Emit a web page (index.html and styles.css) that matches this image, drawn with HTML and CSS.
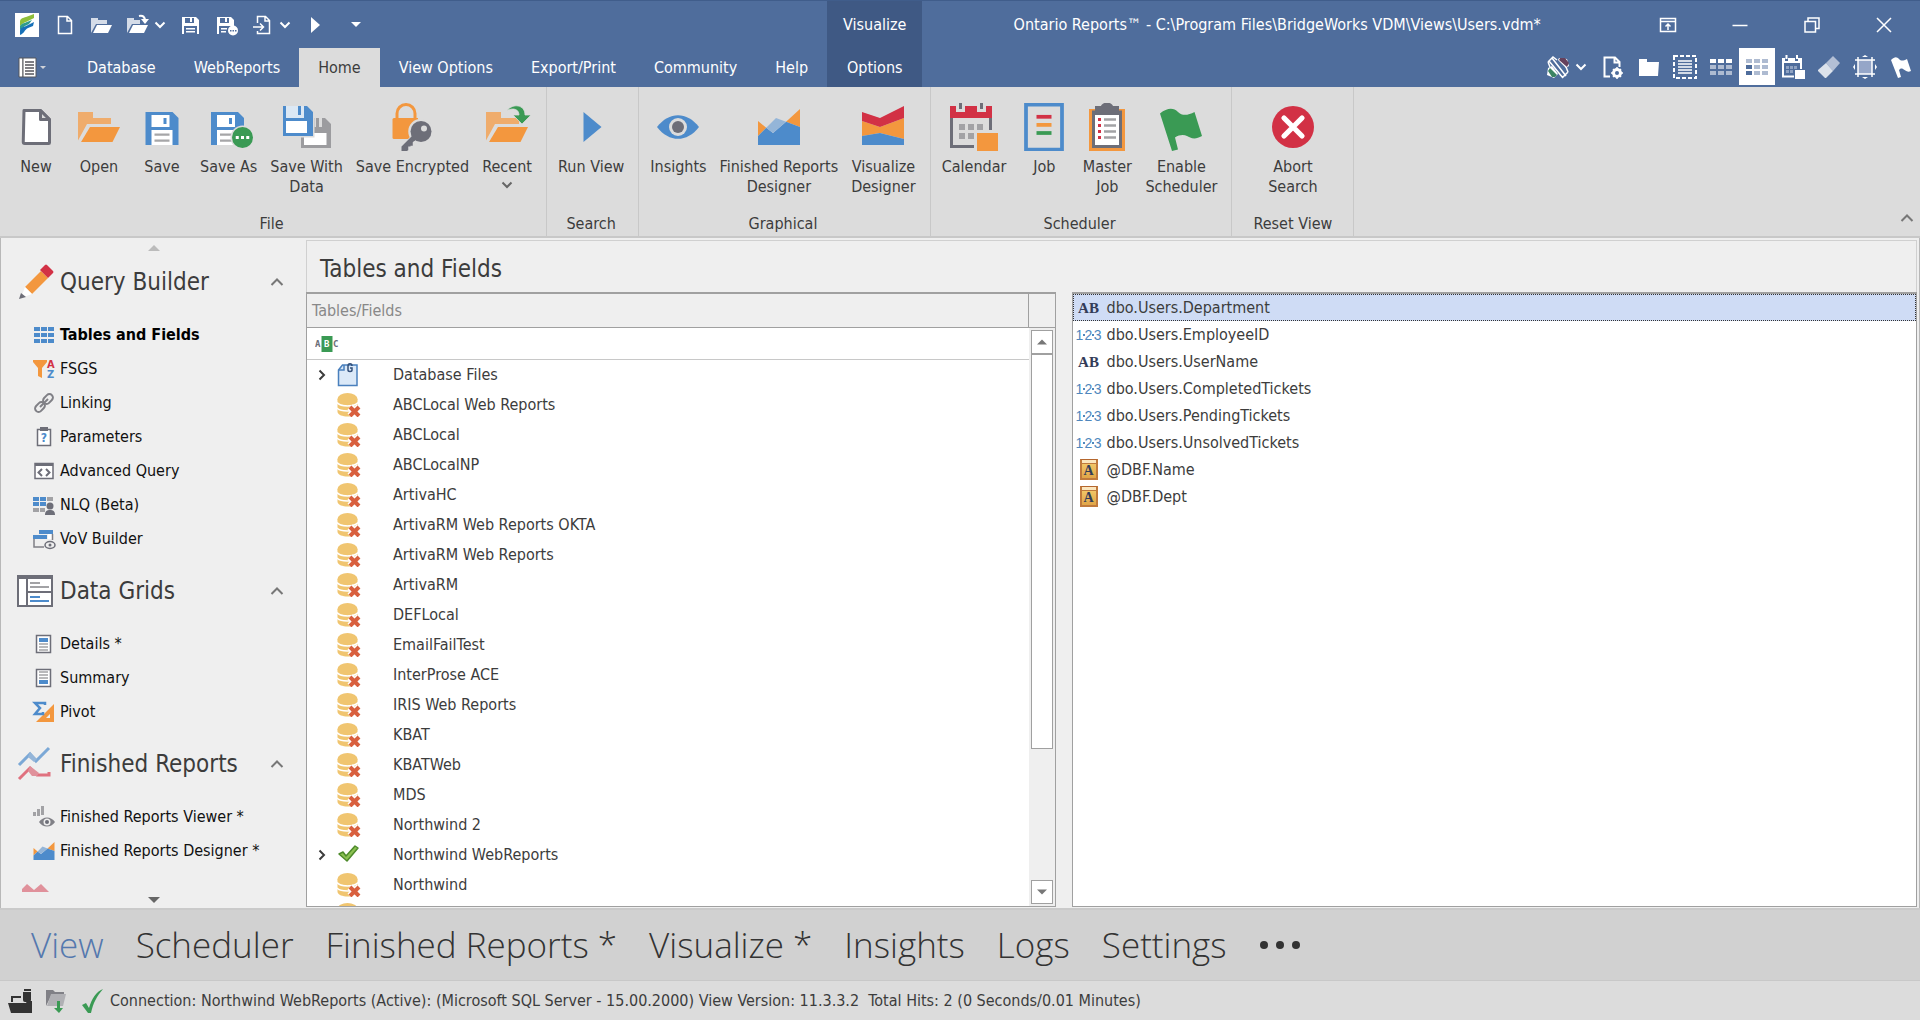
FILE: index.html
```
<!DOCTYPE html>
<html lang="en">
<head>
    <meta charset="UTF-8">
    <meta name="viewport" content="width=device-width, initial-scale=1.0">
    <title>Ontario Reports</title>
    <link rel="stylesheet" href="styles.css">
</head>
<body>
    <!-- shared icons -->
    <svg class="defs" width="0" height="0" aria-hidden="true">
        <symbol id="i-chev-down" viewBox="0 0 12 8"><path d="M1.500 1.500L6 6l4.500-4.500" fill="none" stroke="currentColor" stroke-width="2"/></symbol>
        <symbol id="i-chev-up" viewBox="0 0 14 10"><path d="M1.500 8L7 2.500L12.500 8" fill="none" stroke="currentColor" stroke-width="2"/></symbol>
        <symbol id="i-chev-right" viewBox="0 0 8 12"><path d="M1.500 1.500L6 6L1.500 10.500" fill="none" stroke="currentColor" stroke-width="2"/></symbol>
        <symbol id="i-tri-down" viewBox="0 0 12 6"><path d="M0 0h12L6 6z" fill="currentColor"/></symbol>
        <symbol id="i-tri-up" viewBox="0 0 12 6"><path d="M0 6h12L6 0z" fill="currentColor"/></symbol>
        <symbol id="i-db" viewBox="0 0 24 24">
            <path d="M.5 6v13c1 6 19 6 20 0V6z" fill="#f0c570"/>
            <path d="M0 9.500c3 4.500 18 4.500 21 0M0 15c3 4 18 4 21 0" fill="none" stroke="#fff" stroke-width="1.500"/>
            <ellipse cx="10.500" cy="6" rx="10" ry="6" fill="#f0c570"/>
            <path d="M13 14l9 9M22 14l-9 9" stroke="#fff" stroke-width="7"/>
            <path d="M13 14l9 9M22 14l-9 9" stroke="#d9603f" stroke-width="4"/>
        </symbol>
        <symbol id="i-area" viewBox="0 0 32 32">
            <path d="M2 12l5.500 4.500L2 22zM20.700 12.500L30 4v12z" fill="#f3973e"/>
            <path d="M2 22l5.500-5.500L12 20l8.700-7.500L30 16v12H2z" fill="#4d8bcb"/>
            <path d="M7.500 16.500L14 10l6.700 2.500L12 20z" fill="#94b5d8"/>
        </symbol>
    </svg>

    <header class="app-header">
        <div class="header-left">
            <div class="quick-bar">
                <svg class="logo" viewBox="0 0 24 24"><path d="M0 0h24v24H0z" fill="#fff"/><path d="M5 13V9c0-4 3-4 6-5l8-3v4l-8 4c-3 1-4 2-6 4z" fill="#8fbf3a"/><path d="M5 13c2-3 5-3 7-4l5-2-3 4-4 2-5 4z" fill="#2f9c8c"/><path d="M5 22v-4c0-3 3-4 6-5l8-4-1 4-5 2c-4 2-3 5-8 7z" fill="#1670b8"/></svg>
                <button class="quick-btn" aria-label="New"><svg viewBox="0 0 24 24"><path d="M5.500 3.500h9l4 4v13h-13zM14 4v4h4" fill="none" stroke="#fff" stroke-width="1.500"/></svg></button>
                <button class="quick-btn" aria-label="Open"><svg viewBox="0 0 24 24"><path d="M2 20V5h7v2h9v4H7z" fill="#d5dce8"/><path d="M4 20l4-8h15l-4 8z" fill="#fff"/></svg></button>
                <button class="quick-btn with-arrow" aria-label="Recent"><svg viewBox="0 0 24 24"><path d="M2 20V5h7v2h6v4H7z" fill="#d5dce8"/><path d="M4 20l4-8h15l-4 8z" fill="#fff"/><path d="M14 3c4-1 6 1 6 5" fill="none" stroke="#fff" stroke-width="2"/><path d="M16 6h8l-4 5z" fill="#fff"/></svg><svg class="arrow"><use href="#i-chev-down"/></svg></button>
                <button class="quick-btn" aria-label="Save"><svg viewBox="0 0 24 24"><path d="M4 4h14l3 3v14H4z" fill="#fff"/><path d="M7 5h9v5H7zM6 13h13v8H6z" fill="#4f6d9c"/><path d="M12 5h2v4h-2zM8 15h9v1.500H8zM8 18h9v1.500H8z" fill="#fff"/></svg></button>
                <button class="quick-btn" aria-label="Save As"><svg viewBox="0 0 24 24"><path d="M3 4h14l3 3v14H3z" fill="#fff"/><path d="M6 5h9v5H6zM5 13h13v8H5z" fill="#4f6d9c"/><path d="M11 5h2v4h-2zM7 15h6v1.500H7zM7 18h5v1.500H7z" fill="#fff"/><circle cx="19" cy="17.500" r="5" fill="#fff"/><path d="M16 17h1.500v1.500H16zM18.500 17H20v1.500h-1.500zM21 17h1.500v1.500H21z" fill="#4f6d9c"/></svg></button>
                <button class="quick-btn with-arrow" aria-label="Import"><svg viewBox="0 0 24 24"><path d="M7.500 10V3.500h8l4 4v13h-12V18M15 4v4h4M3 14h10M10 10.500l3.500 3.500-3.500 3.500" fill="none" stroke="#fff" stroke-width="1.500"/></svg><svg class="arrow"><use href="#i-chev-down"/></svg></button>
                <button class="quick-btn" aria-label="Run"><svg viewBox="0 0 24 24"><path d="M8 4l9 8-9 8z" fill="#fff"/></svg></button>
                <button class="quick-btn quick-more" aria-label="Customize"><svg class="caret"><use href="#i-tri-down"/></svg></button>
            </div>
            <nav class="tabs">
                <button class="app-menu" aria-label="Application menu"><svg viewBox="0 0 28 22"><path d="M1 1h4v19H1z" fill="#fff" stroke="#55565c"/><path d="M5 1h13v19H5z" fill="#fff" stroke="#55565c"/><path d="M7 5h9M7 8h9M7 11h9M7 14h9M7 17h9" stroke="#55565c" stroke-width="1.500"/><path d="M22 9h6l-3 3z" fill="#cfd2d8"/></svg></button>
                <button class="tab">Database</button>
                <button class="tab">WebReports</button>
                <button class="tab active">Home</button>
                <button class="tab">View Options</button>
                <button class="tab">Export/Print</button>
                <button class="tab">Community</button>
                <button class="tab">Help</button>
            </nav>
        </div>
        <div class="header-context">
            <span class="context-title">Visualize</span>
            <button class="tab">Options</button>
        </div>
        <div class="header-right">
            <div class="title-bar">
                <h1 class="window-title">Ontario Reports™ - C:\Program Files\BridgeWorks VDM\Views\Users.vdm*</h1>
                <button class="window-btn" aria-label="Ribbon display"><svg viewBox="0 0 18 18"><path d="M1.500 2.500h15v13h-15zM1.500 5.500h15M9 14V8M6.500 10.500L9 8l2.500 2.500" fill="none" stroke="#fff" stroke-width="1.500"/></svg></button>
                <button class="window-btn" aria-label="Minimize"><svg viewBox="0 0 18 18"><path d="M1.500 9.500h15" stroke="#fff" stroke-width="1.500"/></svg></button>
                <button class="window-btn" aria-label="Restore"><svg viewBox="0 0 18 18"><path d="M2 5.500h10.500V16H2zM5 5V2h11v10.500h-3.500" fill="none" stroke="#fff" stroke-width="1.500"/></svg></button>
                <button class="window-btn" aria-label="Close"><svg viewBox="0 0 18 18"><path d="M2 2l14 14M16 2L2 16" stroke="#fff" stroke-width="1.500"/></svg></button>
            </div>
            <div class="toolbar">
                <button class="tool-btn with-arrow" aria-label="Disconnect"><svg viewBox="0 0 24 24"><path d="M2 7l5-5 4 3M2 7l2 5M22 17l-5 5-3-2M22 17l-2-5M6 3l14 18M3 6l14 17" fill="none" stroke="#fff" stroke-width="1.500"/><path d="M13 3l8 1 2 7-3 2-8-8z" fill="#fff"/><path d="M14 3h5l4 5-2 4-8-7z" fill="#66415c"/><path d="M1 20l1-7 4-2 6 8-4 4z" fill="#fff"/><path d="M2 16l2-3 7 7-2 2H6z" fill="#3c8464"/></svg><svg class="arrow"><use href="#i-chev-down"/></svg></button>
                <button class="tool-btn" aria-label="View settings"><svg viewBox="0 0 24 24"><path d="M9 21.500H3.500v-19H14l4.500 4.500v5M13.500 3v4.500H18" fill="none" stroke="#fff" stroke-width="2"/><circle cx="16" cy="18" r="3.500" fill="none" stroke="#fff" stroke-width="3"/><path d="M16 12v12M10 18h12M12 14l8 8M20 14l-8 8" stroke="#fff" stroke-width="1.500"/><circle cx="16" cy="18" r="2" fill="#4f6d9c"/></svg></button>
                <button class="tool-btn" aria-label="Folder"><svg viewBox="0 0 24 24"><path d="M2 21V4h8v3h12l-1 14z" fill="#fff"/></svg></button>
                <button class="tool-btn" aria-label="Select all"><svg viewBox="0 0 24 24"><path d="M1 1h22v22H1z" fill="none" stroke="#fff" stroke-width="2" stroke-dasharray="4 2"/><path d="M5 6h14M5 9h14M5 12h14M5 15h14M5 18h14" stroke="#fff" stroke-width="1.500"/></svg></button>
                <button class="tool-btn" aria-label="Grid"><svg viewBox="0 0 24 24"><path d="M1 4h6v4H1zM9 4h6v4H9zM17 4h6v4h-6z" fill="#fff"/><path d="M1 10h6v4H1zM9 10h6v4H9zM17 10h6v4h-6zM1 16h6v4H1zM9 16h6v4H9zM17 16h6v4h-6z" fill="#aebbd1"/></svg></button>
                <button class="tool-btn active" aria-label="Grid columns"><svg viewBox="0 0 24 24"><path d="M1 4h6v4H1zM9 4h6v4H9zM17 4h6v4h-6zM9 10h6v4H9zM17 10h6v4h-6zM9 16h6v4H9zM17 16h6v4h-6z" fill="#aebbd1"/><path d="M1 10h6v4H1zM1 16h6v4H1z" fill="#4f6d9c"/></svg></button>
                <button class="tool-btn" aria-label="Calendar"><svg viewBox="0 0 24 24"><path d="M1 3h3v3h3V3h7v3h3V3h4v5H1zM4.500 0h2v4h-2zM15 0h2v4h-2z" fill="#fff"/><path d="M2 7v14.500h11M20 7v7" fill="none" stroke="#fff" stroke-width="2"/><path d="M5 11h3v3H5zM9 11h3v3H9zM13 11h3v3h-3zM5 15h3v3H5zM9 15h3v3H9z" fill="#8fa2c2"/><path d="M14 15h10v9H14z" fill="#fff"/></svg></button>
                <button class="tool-btn" aria-label="Eraser"><svg viewBox="0 0 24 24"><path d="M9 8l7-7 7 7-7 8z" fill="#b3bfd5"/><path d="M9 8l7 8-7 7H8l-7-7v-1z" fill="#fff" opacity=".8"/></svg></button>
                <button class="tool-btn" aria-label="Fit"><svg viewBox="0 0 24 24"><path d="M5 5h14v14H5z" fill="#95a6c8"/><path d="M5 2v20M19 2v20M2 5h20M2 19h20" stroke="#fff" stroke-width="1.500"/><path d="M9 2l3-2 3 2zM9 22l3 2 3-2zM2 9l-2 3 2 3zM22 9l2 3-2 3z" fill="#fff"/></svg></button>
                <button class="tool-btn" aria-label="Flag"><svg viewBox="0 0 24 24"><path d="M2 5c4-4 6-3 8-1s4 2 8 0l4 12c-4 2-6-1-8-2s-3 0-4 1l2 7-3 1z" fill="#fff"/></svg></button>
            </div>
        </div>
    </header>

    <section class="ribbon">
        <div class="ribbon-group">
            <div class="ribbon-items">
                <button class="ribbon-btn"><svg viewBox="0 0 32 32"><path d="M8 5h11l6 6v15.500a.5.500 0 0 1-.5.500h-16a1 1 0 0 1-1-1z" fill="#fff" stroke="#6d6e78" stroke-width="2" stroke-linejoin="round"/><path d="M19 5v6h6z" fill="#dcdcdc" stroke="#6d6e78" stroke-width="2" stroke-linejoin="round"/></svg>New</button>
                <button class="ribbon-btn"><svg viewBox="0 0 32 32"><path d="M2 25V6h10v4h12v4H8z" fill="#efac6c"/><path d="M4 26l6-10h20l-5 10z" fill="#f3973e"/></svg>Open</button>
                <button class="ribbon-btn"><svg viewBox="0 0 32 32"><path d="M5 6h18l4 4v18H5z" fill="#4d8bcb"/><path d="M9 8h12v8H9zM9 18h14v10H9z" fill="#fff"/><path d="M17 10h2v4h-2z" fill="#4d8bcb"/><path d="M11 21h10M11 25h10" stroke="#a6a6a8" stroke-width="1.500"/></svg>Save</button>
                <button class="ribbon-btn"><svg viewBox="0 0 32 32"><path d="M4 6h18l4 4v18H4z" fill="#4d8bcb"/><path d="M8 8h12v8H8zM8 18h14v10H8z" fill="#fff"/><path d="M16 10h2v4h-2z" fill="#4d8bcb"/><path d="M10 21h10M10 25h10" stroke="#a6a6a8" stroke-width="1.500"/><circle cx="25" cy="23" r="8" fill="#dcdcdc"/><circle cx="25" cy="23" r="7" fill="#3a9a54"/><path d="M20.500 22h2v2h-2zM24 22h2v2h-2zM27.500 22h2v2h-2z" fill="#fff"/></svg>Save As</button>
                <button class="ribbon-btn"><svg viewBox="0 0 32 32"><path d="M12 10h16l4 4v16H12z" fill="#9c9c9f"/><path d="M14 20h15v8H14z" fill="#fff"/><path d="M21 10h5v6h-5z" fill="#dcdcdc"/><path d="M22 10h2v6h-2z" fill="#9c9c9f"/><path d="M0 2h16l5 4v17H0z" fill="#dcdcdc"/><path d="M0 2h2v8h12V2h2l4 4v16H0z" fill="#4d8bcb"/><path d="M2 2h12v8H2z" fill="#dce8f4"/><path d="M2 12h14v8H2z" fill="#fff"/><path d="M10 2h2v6h-2z" fill="#4d8bcb"/></svg>Save With<br>Data</button>
                <button class="ribbon-btn"><svg viewBox="0 0 32 32"><path d="M6 11V7a6 6 0 0 1 12 0v4" fill="none" stroke="#f3973e" stroke-width="2"/><path d="M4 10h16v14H4a1 1 0 0 1-1-1V11a1 1 0 0 1 1-1z" fill="#f3973e"/><circle cx="22" cy="19" r="8.500" fill="#dcdcdc"/><path d="M17 21l-8 8v3h5v-3h3v-3l4-3" fill="#6d6e78" stroke="#dcdcdc"/><path d="M18 20l-9 9v3h4v-3h2v-2l6-4z" fill="#6d6e78"/><circle cx="22" cy="19" r="7" fill="#6d6e78"/><circle cx="24" cy="17" r="2" fill="#dcdcdc"/></svg>Save Encrypted</button>
                <button class="ribbon-btn"><svg viewBox="0 0 32 32"><path d="M2 25V6h10v4h12v4H8z" fill="#efac6c"/><path d="M4 26l6-10h20l-5 10z" fill="#f3973e"/><path d="M16 5c4-5 12-4 12 3h4l-6 6-6-6h4c0-4-4-5-8-3z" fill="#3a9a54" stroke="#dcdcdc" stroke-width=".5"/></svg>Recent<svg class="drop"><use href="#i-chev-down"/></svg></button>
            </div>
            <div class="ribbon-label">File</div>
        </div>
        <div class="ribbon-group">
            <div class="ribbon-items">
                <button class="ribbon-btn"><svg viewBox="0 0 32 32"><path d="M11 6l12 10-12 10z" fill="#4d8bcb"/></svg>Run View</button>
            </div>
            <div class="ribbon-label">Search</div>
        </div>
        <div class="ribbon-group">
            <div class="ribbon-items">
                <button class="ribbon-btn"><svg viewBox="0 0 32 32"><path d="M2 16C10 5.500 22 5.500 30 16 22 26.500 10 26.500 2 16z" fill="#4d8bcb"/><circle cx="16" cy="16" r="6" fill="#dcdcdc"/><circle cx="16" cy="16" r="4" fill="#6d6e78"/></svg>Insights</button>
                <button class="ribbon-btn"><svg><use href="#i-area"/></svg>Finished Reports<br>Designer</button>
                <button class="ribbon-btn"><svg viewBox="0 0 32 32"><path d="M2 12l12 4 16-6v14l-16-4-12 2z" fill="#f3973e"/><path d="M2 6l12 4 16-8v8l-16 6-12-4z" fill="#d23145"/><path d="M2 22l12-2 16 4v4H2z" fill="#4d8bcb"/></svg>Visualize<br>Designer</button>
            </div>
            <div class="ribbon-label">Graphical</div>
        </div>
        <div class="ribbon-group">
            <div class="ribbon-items">
                <button class="ribbon-btn"><svg viewBox="0 0 32 32"><path d="M1 10v19h15M27 10v8" fill="none" stroke="#6d6e78" stroke-width="2"/><path d="M0 2h4v4h6V2h8v4h6V2h4v8H0z" fill="#d23145"/><path d="M6 0h2v4H6zM20 0h2v4h-2z" fill="#6d6e78"/><path d="M6 14h4v4H6zM12 14h4v4h-4zM18 14h4v4h-4zM6 20h4v4H6zM12 20h4v4h-4z" fill="#a2a2a5"/><path d="M18 20h14v12H18z" fill="#f3973e"/></svg>Calendar</button>
                <button class="ribbon-btn"><svg viewBox="0 0 32 32"><path d="M4 1h24v30H4z" fill="none" stroke="#4d8bcb" stroke-width="2.500"/><path d="M11 9.200h10" stroke="#d23145" stroke-width="2.500"/><path d="M11 14.600h10" stroke="#f3973e" stroke-width="2.500"/><path d="M11 20h10" stroke="#3a9a54" stroke-width="2.500"/></svg>Job</button>
                <button class="ribbon-btn"><svg viewBox="0 0 32 32"><path d="M4 4h24v28H4z" fill="#f3973e"/><path d="M6 5h20v25H6z" fill="#6d6e78"/><path d="M8 8h16v20H8z" fill="#fff"/><path d="M8 7V2h4c1-3 7-3 8 0h4v5z" fill="#6d6e78"/><path d="M10 10h2v2h-2zM10 14h2v2h-2zM10 18h2v2h-2zM10 22h2v2h-2z" fill="#d23145"/><path d="M14 11h8M14 15h8M14 19h8M14 23h8" stroke="#a2a2a5" stroke-width="1.800"/></svg>Master<br>Job</button>
                <button class="ribbon-btn"><svg viewBox="0 0 32 32"><path d="M2 7c5-4 9-4 12-1s7 2 11 0l5 16c-5 3-8 1-10 0s-5-1-8 1l2 8-4 1z" fill="#3a9a54"/></svg>Enable<br>Scheduler</button>
            </div>
            <div class="ribbon-label">Scheduler</div>
        </div>
        <div class="ribbon-group wide">
            <div class="ribbon-items">
                <button class="ribbon-btn"><svg viewBox="0 0 32 32"><circle cx="16" cy="16" r="14" fill="#d23145"/><path d="M10 10l12 12M22 10L10 22" stroke="#fff" stroke-width="3.500" stroke-linecap="round"/></svg>Abort<br>Search</button>
            </div>
            <div class="ribbon-label">Reset View</div>
        </div>
        <button class="ribbon-collapse" aria-label="Collapse ribbon"><svg class="chev"><use href="#i-chev-up"/></svg></button>
    </section>

    <main class="workspace">
        <aside class="sidebar">
            <button class="side-scroll up" aria-label="Scroll up"><svg class="caret"><use href="#i-tri-up"/></svg></button>
            <div class="side-content">
                <section class="side-section">
                    <button class="side-header"><svg viewBox="0 0 38 38"><path d="M9 24L25 8l7 7-16 16z" fill="#f3973e"/><path d="M24 7l5-5q1-1 2 0l6 6q1 1 0 2l-5 5z" fill="#d23145"/><path d="M9 24l7 7-11 4z" fill="#fff"/><path d="M5 30l5 4-7 2z" fill="#6d6e78"/></svg><span>Query Builder</span><svg class="chev"><use href="#i-chev-up"/></svg></button>
                    <ul>
                        <li><a href="#" class="active"><svg viewBox="0 0 24 24"><path d="M2 4h6v4H2zM9 4h6v4H9zM16 4h6v4h-6zM2 10h6v4H2zM9 10h6v4H9zM16 10h6v4h-6zM2 16h6v4H2zM9 16h6v4H9zM16 16h6v4h-6z" fill="#4d8bcb"/></svg>Tables and Fields</a></li>
                        <li><a href="#"><svg viewBox="0 0 24 24"><path d="M1 3h14v2l-5 6v10l-4-2v-8L1 5z" fill="#f3973e"/><text x="15" y="11" font-size="11" font-weight="700" fill="#d23145">A</text><text x="15" y="21" font-size="11" font-weight="700" fill="#4d8bcb">Z</text></svg>FSGS</a></li>
                        <li><a href="#"><svg viewBox="0 0 24 24"><g fill="none" stroke="#808086" stroke-width="2"><rect x="-5.500" y="-3.500" width="11" height="7" rx="3.500" transform="translate(8 16) rotate(-45)"/><rect x="-5.500" y="-3.500" width="11" height="7" rx="3.500" transform="translate(16 8) rotate(-45)"/><path d="M8 16l8-8"/></g></svg>Linking</a></li>
                        <li><a href="#"><svg viewBox="0 0 24 24"><path d="M5.500 4.500h13v16h-13z" fill="#fff" stroke="#6d6e78" stroke-width="1.500"/><path d="M8 2h8v4H8z" fill="#6d6e78"/><text x="12" y="17" text-anchor="middle" font-size="12" font-weight="700" fill="#4d8bcb">?</text></svg>Parameters</a></li>
                        <li><a href="#"><svg viewBox="0 0 24 24"><path d="M3 4.500h18v15H3z" fill="#fff" stroke="#6d6e78" stroke-width="1.500"/><path d="M3 4h18v3H3z" fill="#6d6e78"/><path d="M10 10l-3.500 3.500L10 17M14 10l3.500 3.500L14 17" fill="none" stroke="#6d6e78" stroke-width="2"/></svg>Advanced Query</a></li>
                        <li><a href="#"><svg viewBox="0 0 24 24"><path d="M1 4h6v4H1zM8 4h6v4H8zM1 9h6v4H1zM8 9h6v4H8z" fill="#4d8bcb"/><path d="M15 4h6v4h-6zM1 15h6v4H1zM8 15h5v4H8z" fill="#a2a2a5"/><circle cx="18" cy="13" r="3.500" fill="#6d6e78"/><path d="M13 22c0-4 2-5 5-5s5 1 5 5z" fill="#6d6e78"/></svg>NLQ (Beta)</a></li>
                        <li><a href="#"><svg viewBox="0 0 24 24"><path d="M7 3h14v9h-5V7H7z" fill="#fff"/><path d="M7 3h14v4H7zM1 8h14v4H1z" fill="#4d8bcb"/><path d="M2 12v8h10M20.500 7v6" fill="none" stroke="#808086" stroke-width="1.500"/><ellipse cx="18" cy="18" rx="5" ry="3.500" fill="#efefef" stroke="#6d6e78" stroke-width="1.500"/><circle cx="18" cy="18" r="1.500" fill="#6d6e78"/></svg>VoV Builder</a></li>
                    </ul>
                </section>
                <section class="side-section">
                    <button class="side-header"><svg viewBox="0 0 38 38"><path d="M2 4h34v30H2z" fill="#fff" stroke="#6d6e78" stroke-width="2"/><path d="M1 3h36v4H1zM10 6h2v28h-2zM11 19h25v2H11z" fill="#6d6e78"/><path d="M14 11h10M14 15h19" stroke="#a2a2a5" stroke-width="2"/><path d="M14 25h10M14 29h19" stroke="#4d8bcb" stroke-width="2"/></svg><span>Data Grids</span><svg class="chev"><use href="#i-chev-up"/></svg></button>
                    <ul>
                        <li><a href="#"><svg viewBox="0 0 24 24"><path d="M4.500 3.500h14v17h-14z" fill="#fff" stroke="#6d6e78" stroke-width="1.500"/><path d="M7 6h9v4H7z" fill="#4d8bcb"/><path d="M7 12h9M7 15h9M7 18h9" stroke="#a2a2a5" stroke-width="1.500"/></svg>Details *</a></li>
                        <li><a href="#"><svg viewBox="0 0 24 24"><path d="M4.500 3.500h14v17h-14z" fill="#fff" stroke="#6d6e78" stroke-width="1.500"/><path d="M7 14h9v4H7z" fill="#4d8bcb"/><path d="M7 6h9M7 9h9M7 12h9" stroke="#a2a2a5" stroke-width="1.500"/></svg>Summary</a></li>
                        <li><a href="#"><svg viewBox="0 0 24 24"><path d="M22 4v18H4zM18 14l-4 4h4z" fill="#f3973e" fill-rule="evenodd"/><path d="M13 5V3H3l5 5-5 6h8v-2" fill="none" stroke="#4d8bcb" stroke-width="2.500"/></svg>Pivot</a></li>
                    </ul>
                </section>
                <section class="side-section">
                    <button class="side-header"><svg viewBox="0 0 38 38"><path d="M3 20L14 9l6 7L33 3" fill="none" stroke="#7ba8d6" stroke-width="3"/><path d="M14 7l7 7-3 3-6-5z" fill="#94b5d8"/><path d="M3 34l11-11 7 7h12v-3" fill="none" stroke="#e0717f" stroke-width="3"/><path d="M14 21l9 7-2 3h-5l-4-5z" fill="#e0919b"/></svg><span>Finished Reports</span><svg class="chev"><use href="#i-chev-up"/></svg></button>
                    <ul>
                        <li><a href="#"><svg viewBox="0 0 24 24"><path d="M1 7h3v4H1zM5 4h3v7H5zM9 1h3v9H9z" fill="#a2a2a5"/><path d="M7 17c4-6 12-6 16 0-4 6-12 6-16 0z" fill="#808086"/><circle cx="15" cy="17" r="3.500" fill="#efefef"/><circle cx="15" cy="17" r="2" fill="#6d6e78"/></svg>Finished Reports Viewer *</a></li>
                        <li><a href="#"><svg><use href="#i-area"/></svg>Finished Reports Designer *</a></li>
                    </ul>
                </section>
                <section class="side-section">
                    <button class="side-header" aria-label="Visualize"><svg viewBox="0 0 38 38"><path d="M6 5l5-5 7 6 7-6 9 9H6z" fill="#e0919b"/></svg></button>
                </section>
            </div>
            <button class="side-scroll down" aria-label="Scroll down"><svg class="caret"><use href="#i-tri-down"/></svg></button>
        </aside>

        <div class="content">
            <h2 class="content-title">Tables and Fields</h2>
            <div class="panels">
                <section class="tree-panel">
                    <div class="tree-head"><label for="treeFilter">Tables/Fields</label></div>
                    <div class="tree-main">
                        <div class="tree-list">
                            <div class="tree-filter">
                                <svg viewBox="0 0 24 18"><path d="M6.500 1h11v16h-11z" fill="#3a9a54"/><g font-size="9" font-weight="700" font-family="DejaVu Sans Mono, monospace"><text x="0" y="12" fill="#6d6e78">A</text><text x="9" y="12" fill="#fff">B</text><text x="18" y="12" fill="#6d6e78">C</text></g></svg>
                                <input type="text" id="treeFilter">
                            </div>
                            <ul class="tree">
                                <li><svg class="expand"><use href="#i-chev-right"/></svg><svg class="node" viewBox="0 0 24 24"><path d="M1.500 7l4-5H20v20.500H1.500z" fill="#dbe9f8" stroke="#4a80bd" stroke-width="1.500"/><path d="M2 7h5V2" fill="none" stroke="#4a80bd" stroke-width="1.500"/><path d="M15 3c0-3-4-3-4 0v4c0 2 4 2 4 0V5h-2" fill="none" stroke="#34507a" stroke-width="1.500"/></svg>Database Files</li>
                                <li><svg class="node"><use href="#i-db"/></svg>ABCLocal Web Reports</li>
                                <li><svg class="node"><use href="#i-db"/></svg>ABCLocal</li>
                                <li><svg class="node"><use href="#i-db"/></svg>ABCLocalNP</li>
                                <li><svg class="node"><use href="#i-db"/></svg>ArtivaHC</li>
                                <li><svg class="node"><use href="#i-db"/></svg>ArtivaRM Web Reports OKTA</li>
                                <li><svg class="node"><use href="#i-db"/></svg>ArtivaRM Web Reports</li>
                                <li><svg class="node"><use href="#i-db"/></svg>ArtivaRM</li>
                                <li><svg class="node"><use href="#i-db"/></svg>DEFLocal</li>
                                <li><svg class="node"><use href="#i-db"/></svg>EmailFailTest</li>
                                <li><svg class="node"><use href="#i-db"/></svg>InterProse ACE</li>
                                <li><svg class="node"><use href="#i-db"/></svg>IRIS Web Reports</li>
                                <li><svg class="node"><use href="#i-db"/></svg>KBAT</li>
                                <li><svg class="node"><use href="#i-db"/></svg>KBATWeb</li>
                                <li><svg class="node"><use href="#i-db"/></svg>MDS</li>
                                <li><svg class="node"><use href="#i-db"/></svg>Northwind 2</li>
                                <li><svg class="expand"><use href="#i-chev-right"/></svg><svg class="node" viewBox="0 0 24 24"><path d="M2 11l4-2 3 4 9-10 3 2L10 18z" fill="#8cc152" stroke="#4d8a2a" stroke-width="1.500" stroke-linejoin="round"/></svg>Northwind WebReports</li>
                                <li><svg class="node"><use href="#i-db"/></svg>Northwind</li>
                                <li><svg class="node"><use href="#i-db"/></svg></li>
                            </ul>
                        </div>
                        <div class="scrollbar">
                            <button class="scroll-btn" aria-label="Scroll up"><svg><use href="#i-tri-up"/></svg></button>
                            <div class="scroll-track"><div class="scroll-thumb"></div></div>
                            <button class="scroll-btn" aria-label="Scroll down"><svg><use href="#i-tri-down"/></svg></button>
                        </div>
                    </div>
                </section>
                <ul class="field-list">
                    <li class="selected"><span class="type-text">AB</span>dbo.Users.Department</li>
                    <li><span class="type-num">1<i></i>2<i></i>3</span>dbo.Users.EmployeeID</li>
                    <li><span class="type-text">AB</span>dbo.Users.UserName</li>
                    <li><span class="type-num">1<i></i>2<i></i>3</span>dbo.Users.CompletedTickets</li>
                    <li><span class="type-num">1<i></i>2<i></i>3</span>dbo.Users.PendingTickets</li>
                    <li><span class="type-num">1<i></i>2<i></i>3</span>dbo.Users.UnsolvedTickets</li>
                    <li><span class="type-book">A</span>@DBF.Name</li>
                    <li><span class="type-book">A</span>@DBF.Dept</li>
                </ul>
            </div>
        </div>
    </main>

    <nav class="bottom-nav">
        <a href="#" class="active">View</a>
        <a href="#">Scheduler</a>
        <a href="#">Finished Reports *</a>
        <a href="#">Visualize *</a>
        <a href="#">Insights</a>
        <a href="#">Logs</a>
        <a href="#">Settings</a>
        <button class="more" aria-label="More"><svg viewBox="0 0 42 10"><circle cx="5" cy="5" r="4" fill="#333"/><circle cx="21" cy="5" r="4" fill="#333"/><circle cx="37" cy="5" r="4" fill="#333"/></svg></button>
    </nav>

    <footer class="status-bar">
        <div class="status-icons">
            <svg viewBox="0 0 24 24"><path d="M0 14h18l1-2h5v12H3z" fill="#333"/><path d="M4 13V8h9" fill="none" stroke="#333" stroke-width="2"/><path d="M15 3h8v8q0 2-2 2h-4q-2 0-2-2zM16 0h7v2h-7z" fill="#333"/></svg>
            <svg viewBox="0 0 24 24"><path d="M2 17V1h7l2 2h9v4H7z" fill="#808086"/><path d="M3 17L7 5h15l-3 12z" fill="#b0b0b4"/><path d="M13 12h3v7h3l-4 5-5-5h3z" fill="#3a9a54"/></svg>
            <svg viewBox="0 0 24 24"><path d="M2 16l4-2 3 5C12 9 16 3 23 0 17 7 13 14 11 24H8z" fill="#3a9a54"/></svg>
        </div>
        <span>Connection: Northwind WebReports (Active): (Microsoft SQL Server - 15.00.2000) View Version: 11.3.3.2&nbsp; Total Hits: 2 (0 Seconds/0.01 Minutes)</span>
    </footer>
</body>
</html>
```
FILE: styles.css
```
* {
    box-sizing: border-box;
}
body {
    margin: 0;
    height: 100vh;
    display: flex;
    flex-direction: column;
    overflow: hidden;
    font-family: "DejaVu Sans Condensed", Tahoma, sans-serif;
    font-size: 16px;
    line-height: 20px;
    color: #3c3c3c;
    background-color: #efefef;
}
button {
    margin: 0;
    padding: 0;
    border: none;
    background: none;
    font: inherit;
    color: inherit;
    cursor: pointer;
}
ul {
    list-style: none;
    margin: 0;
    padding: 0;
}
svg {
    display: block;
    flex: none;
}
.defs {
    position: absolute;
}
.caret {
    width: 12px;
    height: 6px;
}
.chev {
    width: 14px;
    height: 10px;
    color: #777;
}

/* header */
.app-header {
    display: flex;
    background-color: #4f6d9c;
    border-top: 1px solid #405d8b;
    color: #fff;
}
.header-left {
    display: flex;
    flex-direction: column;
}
.quick-bar {
    display: flex;
    align-items: center;
    gap: 12px;
    height: 47px;
    padding-left: 15px;
}
.logo, .quick-btn svg, .tool-btn svg {
    width: 24px;
    height: 24px;
}
.logo {
    margin-right: 2px;
}
.with-arrow {
    display: flex;
    align-items: center;
    gap: 5px;
}
.with-arrow .arrow {
    width: 12px;
    height: 8px;
}
.quick-more .caret {
    width: 10px;
    height: 5px;
}
.quick-more {
    padding: 0 12px;
}
.tabs {
    display: flex;
}
.app-menu {
    width: 68px;
    padding-left: 18px;
}
.app-menu svg {
    width: 28px;
    height: 22px;
}
.tab {
    height: 39px;
    padding: 0 19px;
}
.tab.active {
    background-color: #dcdcdc;
    color: #3c3c3c;
}
.header-context {
    display: flex;
    flex-direction: column;
    align-items: center;
    background-color: #3f5984;
}
.context-title {
    height: 47px;
    padding: 0 16px;
    line-height: 47px;
}
.header-right {
    flex: 1;
}
.title-bar {
    display: flex;
    align-items: center;
    height: 47px;
}
.window-title {
    flex: 1;
    margin: 0;
    font-size: 16px;
    font-weight: 400;
    text-align: center;
    white-space: nowrap;
}
.window-btn {
    display: flex;
    justify-content: center;
    align-items: center;
    width: 72px;
    height: 47px;
}
.window-btn svg {
    width: 18px;
    height: 18px;
}
.toolbar {
    display: flex;
    justify-content: flex-end;
    padding-right: 1px;
}
.tool-btn {
    display: flex;
    align-items: center;
    height: 37px;
    padding: 0 6px;
}
.tool-btn.active {
    background-color: #fff;
}
.tool-btn.with-arrow {
    padding-right: 8px;
}

/* ribbon */
.ribbon {
    position: relative;
    display: flex;
    height: 151px;
    background-color: #dcdcdc;
    border-bottom: 2px solid #c8c8c8;
}
.ribbon-group {
    display: flex;
    flex-direction: column;
    justify-content: space-between;
    padding: 16px 8px 2px 5px;
    border-right: 1px solid #c8c8c8;
}
.ribbon-group.wide {
    padding-left: 21px;
    padding-right: 21px;
}
.ribbon-items {
    display: flex;
    justify-content: center;
    gap: 1px;
}
.ribbon-btn {
    display: flex;
    flex-direction: column;
    align-items: center;
    min-width: 62px;
    padding: 0 6px;
}
.ribbon-btn svg {
    width: 48px;
    height: 48px;
    margin-bottom: 6px;
}
.ribbon-btn .drop {
    width: 12px;
    height: 8px;
    margin-top: 4px;
    color: #666;
}
.ribbon-label {
    text-align: center;
}
.ribbon-collapse {
    position: absolute;
    right: 6px;
    bottom: 13px;
}

/* workspace */
.workspace {
    flex: 1;
    display: flex;
    min-height: 0;
    border: 1px solid #b8b8b8;
    border-top: none;
    border-bottom: none;
}
.sidebar {
    display: flex;
    flex-direction: column;
    width: 305px;
}
.side-scroll {
    display: flex;
    justify-content: center;
    align-items: center;
    flex: none;
    color: #666;
}
.side-scroll.up {
    height: 13px;
    padding-top: 6px;
    color: #bbb;
}
.side-scroll.down {
    height: 16px;
}
.side-content {
    flex: 1;
    min-height: 0;
    overflow: hidden;
}
.side-section {
    margin-bottom: 4px;
}
.side-header {
    display: flex;
    align-items: center;
    width: 100%;
    height: 62px;
    margin-bottom: 5px;
    padding: 0 22px 0 15px;
    font-size: 24px;
    line-height: 30px;
}
.side-header svg:first-child {
    width: 38px;
    height: 38px;
    margin-right: 6px;
}
.side-header .chev {
    margin-left: auto;
}
.side-section a {
    display: flex;
    align-items: center;
    gap: 4px;
    height: 34px;
    padding-left: 31px;
    color: #111;
    text-decoration: none;
}
.side-section a.active {
    font-weight: 700;
    color: #000;
}
.side-section a svg {
    width: 24px;
    height: 24px;
}

/* tables and fields */
.content {
    flex: 1;
    display: flex;
    flex-direction: column;
    min-width: 0;
    padding: 2px 2px 1px 0;
}
.content-title {
    margin: 0;
    padding: 13px 13px 8px;
    border: 1px solid #d0d0d0;
    border-bottom: none;
    font-size: 24px;
    font-weight: 400;
    line-height: 30px;
}
.panels {
    flex: 1;
    display: grid;
    grid-template-columns: 750fr 846fr;
    gap: 16px;
    min-height: 0;
}
.tree-panel, .field-list {
    border: 1px solid #a0a0a0;
    border-top-width: 2px;
    min-height: 0;
}
.tree-panel {
    display: flex;
    flex-direction: column;
    background-color: #efefef;
}
.tree-head {
    position: relative;
    height: 34px;
    padding: 7px 5px;
    border-bottom: 1px solid #a0a0a0;
    color: #888;
}
/* divider over the scrollbar column */
.tree-head::after {
    content: "";
    position: absolute;
    top: 0;
    bottom: 0;
    right: 26px;
    border-right: 1px solid #a0a0a0;
}
.tree-main {
    flex: 1;
    display: flex;
    min-height: 0;
}
.tree-list {
    flex: 1;
    overflow: hidden;
    background-color: #fff;
}
.tree-filter {
    display: flex;
    align-items: center;
    height: 32px;
    padding-left: 8px;
    border-bottom: 1px solid #c8c8c8;
}
.tree-filter svg {
    width: 24px;
    height: 18px;
}
.tree-filter input {
    flex: 1;
    border: none;
    outline: none;
    font: inherit;
}
.tree li {
    display: flex;
    align-items: center;
    position: relative;
    height: 30px;
    padding-left: 30px;
}
.tree .node {
    width: 24px;
    height: 24px;
    margin-right: 32px;
}
.tree .expand {
    position: absolute;
    left: 11px;
    width: 8px;
    height: 12px;
}
.scrollbar {
    display: flex;
    flex-direction: column;
    width: 26px;
    padding: 2px;
}
.scroll-btn {
    display: flex;
    justify-content: center;
    align-items: center;
    height: 24px;
    border: 1px solid #a0a0a0;
    background-color: #fff;
    color: #777;
}
.scroll-btn svg {
    width: 10px;
    height: 6px;
}
.scroll-track {
    flex: 1;
}
.scroll-thumb {
    height: 75%;
    border: 1px solid #a0a0a0;
    background-color: #fff;
}
.field-list {
    background-color: #fff;
}
.field-list li {
    display: flex;
    align-items: center;
    gap: 5px;
    height: 27px;
    padding-left: 2px;
    border: 1px solid transparent;
}
.field-list li.selected {
    background-color: #cfdcf5;
    border: 1px dotted #333;
}
.type-text, .type-num {
    width: 26px;
    text-align: center;
}
.type-text {
    font-family: "Liberation Serif", serif;
    font-size: 15px;
    font-weight: 700;
    color: #333c58;
}
.type-num {
    display: flex;
    justify-content: center;
    align-items: center;
    font-family: "Liberation Sans", Arial, sans-serif;
    font-size: 14px;
    color: #4f87bd;
}
.type-num i {
    width: 2px;
    height: 2px;
    background-color: #4f87bd;
}
.type-book {
    width: 18px;
    height: 21px;
    margin: 0 4px;
    border: 2px solid #c07a3c;
    border-top: 1px solid #b4662e;
    background: linear-gradient(#fbe6bd 3px, #c07a3c 3px, #c07a3c 4px, #f2c666 4px, #e0a548);
    font-family: "Liberation Serif", serif;
    font-size: 14px;
    font-weight: 700;
    line-height: 22px;
    text-align: center;
    color: #333c58;
}

/* bottom */
.bottom-nav {
    display: flex;
    align-items: center;
    gap: 32px;
    height: 72px;
    padding-left: 31px;
    background-color: #d1d1d1;
    border-top: 2px solid #cacaca;
    font-family: "Open Sans", "Segoe UI", sans-serif;
    font-size: 35px;
    font-weight: 300;
    line-height: 48px;
}
.bottom-nav a {
    color: #333;
    text-decoration: none;
}
.bottom-nav a.active {
    color: #5478ae;
}
.more svg {
    width: 42px;
    height: 10px;
}
.status-bar {
    display: flex;
    align-items: center;
    gap: 6px;
    height: 40px;
    padding-left: 8px;
    background-color: #dcdcdc;
    border-top: 1px solid #c8c8c8;
}
.status-icons {
    display: flex;
    gap: 12px;
}
.status-icons svg {
    width: 24px;
    height: 24px;
}
```
